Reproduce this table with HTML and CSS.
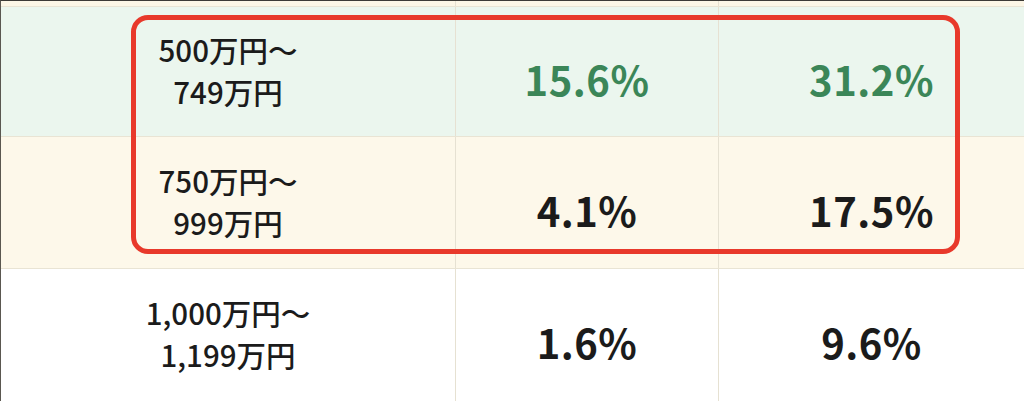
FILE: index.html
```html
<!DOCTYPE html>
<html lang="ja">
<head>
<meta charset="utf-8">
<title>年収別割合</title>
<link rel="stylesheet" href="styles.css">
</head>
<body>
<div class="frame">
  <div class="row prev">
    <div class="cell label"></div>
    <div class="cell"></div>
    <div class="cell last"></div>
  </div>
  <div class="row green">
    <div class="cell label"><span>500万円～<br>749万円</span></div>
    <div class="cell pct hl">15.6%</div>
    <div class="cell pct hl last">31.2%</div>
  </div>
  <div class="row cream">
    <div class="cell label"><span>750万円～<br>999万円</span></div>
    <div class="cell pct">4.1%</div>
    <div class="cell pct last">17.5%</div>
  </div>
  <div class="row white">
    <div class="cell label"><span>1,000万円～<br>1,199万円</span></div>
    <div class="cell pct">1.6%</div>
    <div class="cell pct last">9.6%</div>
  </div>
  <div class="highlight-box"></div>
</div>
</body>
</html>
```

FILE: styles.css
```css
* { box-sizing: border-box; }
html, body { margin: 0; padding: 0; background: #fff; overflow: hidden; }
body {
  font-family: "Noto Sans CJK JP", "Noto Sans", sans-serif;
  color: #1b1b1b;
}
.frame {
  position: relative;
  width: 1024px;
  height: 401px;
  border-top: 1px solid #3c3a36;
  border-left: 1px solid #5a5750;
  overflow: hidden;
}
.row {
  display: grid;
  grid-template-columns: 455px 263px 1fr;
  border-bottom: 1px solid #e9e4d4;
}
.cell {
  border-right: 1px solid #e6e1d2;
  display: flex;
  align-items: center;
  justify-content: center;
}
.cell.last { border-right: none; }
.row.prev { height: 6px; background: #fcf6e6; }
.row.green { height: 130px; background: #ebf6ee; }
.row.cream { height: 132px; background: #fdf8ea; }
.row.white { height: 132px; background: #ffffff; border-bottom: none; }
.label {
  font-size: 29.5px;
  font-weight: 500;
  line-height: 42px;
  text-align: center;
}
.label span { display: block; margin-top: -4px; }
.pct {
  font-size: 40px;
  font-weight: 700;
  padding-top: 14px;
  letter-spacing: 0.5px;
}
.pct.hl { color: #3b8658; }
.highlight-box {
  position: absolute;
  left: 130px;
  top: 14px;
  width: 829px;
  height: 239px;
  border: 5px solid #e8392b;
  border-radius: 17px;
  pointer-events: none;
}
```
